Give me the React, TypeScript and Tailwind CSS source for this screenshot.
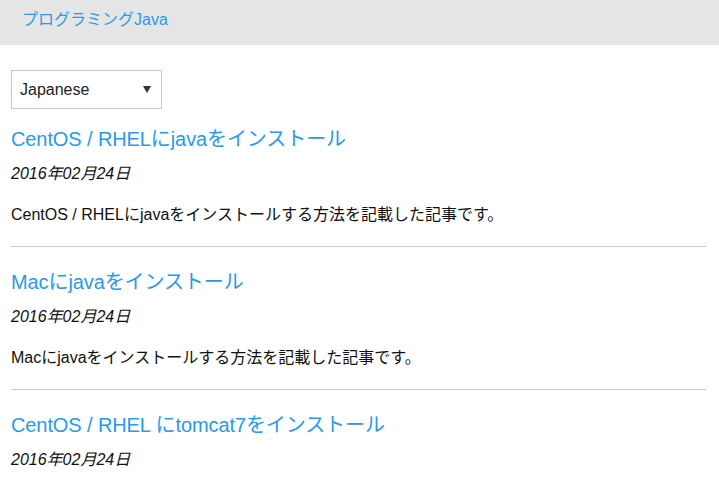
import React from "react";

const items = [
  { title: "CentOS / RHELにjavaをインストール", date: "2016年02月24日", desc: "CentOS / RHELにjavaをインストールする方法を記載した記事です。" },
  { title: "Macにjavaをインストール", date: "2016年02月24日", desc: "Macにjavaをインストールする方法を記載した記事です。" },
  { title: "CentOS / RHEL にtomcat7をインストール", date: "2016年02月24日", desc: "CentOS / RHEL にtomcat7をインストールする方法を記載した記事です。" },
];

export default function App() {
  return (
    <div className="h-[485px] overflow-hidden bg-white" style={{ fontFamily: '"Liberation Sans", "Noto Sans CJK JP", sans-serif' }}>
      <div className="h-[45px] bg-[#e5e5e5] px-[22px] pt-[8px]">
        <a className="text-[16px] leading-[20px] text-[#2a9ae8]">プログラミングJava</a>
      </div>
      <div className="px-[11px]">
        <div className="mt-[25px] flex h-[39px] w-[151px] items-center justify-between border border-[#c8c8c8] pl-[8px] pr-[10px]">
          <span className="text-[16px] text-[#222]">Japanese</span>
          <svg width="8" height="7" viewBox="0 0 8 7"><path d="M0 0h8L4 7z" fill="#333" /></svg>
        </div>
        {items.map((it, i) => (
          <div key={i} className={i > 0 ? "border-t border-[#cccccc] mr-[2px]" : "mr-[2px]"}>
            <div className={i > 0 ? "pt-[21px]" : "pt-[16px]"}>
              <div className="text-[20px] leading-[28px] text-[#2a9ae8] tracking-[-0.1px]">{it.title}</div>
              <div className="mt-[11px] text-[16px] leading-[20px] italic text-[#111]">{it.date}</div>
              <div className="mt-[21px] text-[16px] leading-[20px] text-[#111]">{it.desc}</div>
              <div className="h-[21px]" />
            </div>
          </div>
        ))}
      </div>
    </div>
  );
}
